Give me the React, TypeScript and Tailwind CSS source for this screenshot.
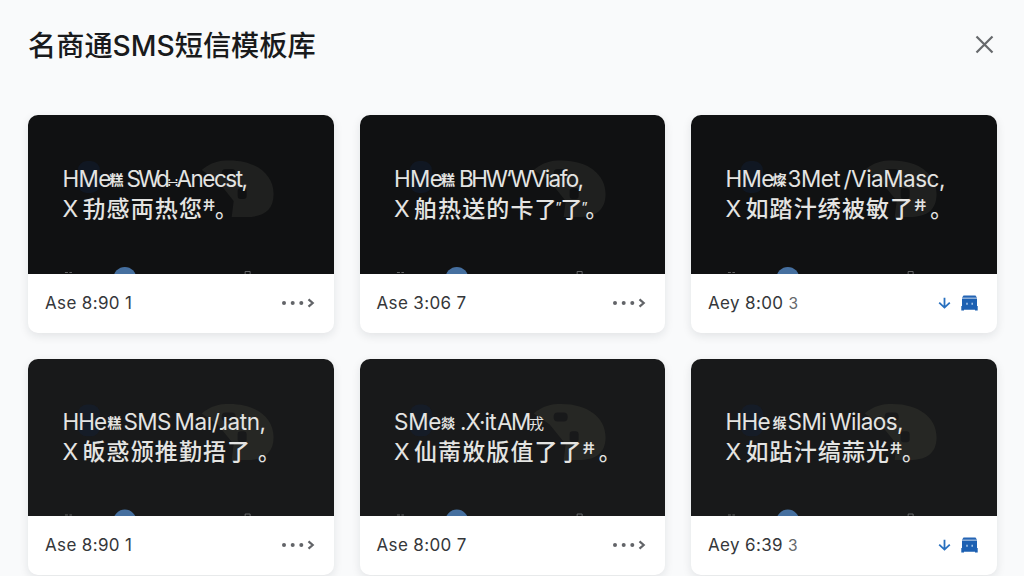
type Segment = { text: string; className?: string };

type Template = {
  first: Segment[];
  second: Segment[];
  name: string;
  count: string;
  action: "more" | "download";
};

const small = "text-[14px] font-bold relative -top-[2px] pl-px w-[16px]";
const mark = "text-[12px] font-bold relative -top-[7px] w-[12px]";
const cross = "w-[20px] font-normal";
const han = "text-[23px] tracking-[1.1px]";
const stop = "text-[22px]";

const templates: Template[] = [
  {
    first: [
      { text: "HMe", className: "w-[46px] tracking-[-0.7px]" },
      { text: "糕", className: small },
      { text: "SWd", className: "w-[42px] pl-0.5 tracking-[-3px]" },
      { text: "∺", className: "w-[10px] text-[14px]" },
      { text: "Anecst,", className: "w-[72px] tracking-[-1.5px]" },
    ],
    second: [
      { text: "X", className: cross },
      { text: "劧感両热您", className: han },
      { text: "井", className: mark },
      { text: "。", className: stop },
    ],
    name: "Ase 8:90",
    count: "1",
    action: "more",
  },
  {
    first: [
      { text: "HMe", className: "w-[46px] tracking-[-0.7px]" },
      { text: "糕", className: small },
      { text: "BHW", className: "w-[50px] pl-[3px] tracking-[-2.4px]" },
      { text: "‘WViafo,", className: "w-[80px] tracking-[-1.6px]" },
    ],
    second: [
      { text: "X", className: cross },
      { text: "舶热送的卡", className: han },
      { text: "了", className: "text-[22px] w-[21px]" },
      { text: "”", className: "text-[13px] w-[5px] relative -top-[5px]" },
      { text: "了", className: "text-[22px] w-[21px]" },
      { text: "”", className: "text-[13px] w-[4px] relative -top-[5px]" },
      { text: "。", className: stop },
    ],
    name: "Ase 3:06",
    count: "7",
    action: "more",
  },
  {
    first: [
      { text: "HMe", className: "w-[46px] tracking-[-0.7px]" },
      { text: "燦", className: small },
      { text: "3Met", className: "w-[56px] tracking-[-0.5px]" },
      { text: "/ViaMasc,", className: "w-[103px] tracking-[-0.5px]" },
    ],
    second: [
      { text: "X", className: cross },
      { text: "如踏汁绣被敏了", className: han },
      { text: "井", className: mark },
      { text: "。", className: "text-[22px] pl-1" },
    ],
    name: "Aey 8:00",
    count: "3",
    action: "download",
  },
  {
    first: [
      { text: "HHe", className: "w-[44px] tracking-[-1px]" },
      { text: "糕", className: small },
      { text: "SMS", className: "w-[52px] pl-px tracking-[-0.6px]" },
      { text: "Maı/ɹatn,", className: "w-[92px] tracking-[-0.4px]" },
    ],
    second: [
      { text: "X", className: cross },
      { text: "皈惑颁推勤捂", className: han },
      { text: "了", className: "text-[23px] w-[31px]" },
      { text: "。", className: stop },
    ],
    name: "Ase 8:90",
    count: "1",
    action: "more",
  },
  {
    first: [
      { text: "SMe", className: "w-[46px] tracking-[-0.2px]" },
      { text: "燚", className: small },
      { text: ".X·it", className: "w-[41px] pl-1 tracking-[-0.9px]" },
      { text: "AM", className: "w-[32px] tracking-[-1.4px]" },
      { text: "戎", className: "text-[15px] w-[15px] relative -top-px" },
    ],
    second: [
      { text: "X", className: cross },
      { text: "仙萳敚版值了了", className: han },
      { text: "井", className: mark },
      { text: "。", className: "text-[22px] pl-1" },
    ],
    name: "Ase 8:00",
    count: "7",
    action: "more",
  },
  {
    first: [
      { text: "HHe", className: "w-[46px] tracking-[-0.7px]" },
      { text: "缑", className: small },
      { text: "SMi", className: "w-[42px] tracking-[-0.5px]" },
      { text: "Wilaos,", className: "w-[75px] tracking-[-0.6px]" },
    ],
    second: [
      { text: "X", className: cross },
      { text: "如跕汁缟蒜光", className: han },
      { text: "井", className: mark },
      { text: "。", className: stop },
    ],
    name: "Aey 6:39",
    count: "3",
    action: "download",
  },
];

function Line({ segments, className }: { segments: Segment[]; className: string }) {
  return (
    <p className={`flex items-baseline whitespace-pre ${className}`}>
      {segments.map((segment, i) => (
        <span key={i} className={`shrink-0 leading-[30px] ${segment.className ?? ""}`}>
          {segment.text}
        </span>
      ))}
    </p>
  );
}

function Backdrop({ dark }: { dark: boolean }) {
  const base = dark ? "#101112" : "#18191a";
  const blob = dark ? "#1f201f" : "#262724";
  return (
    <svg className="absolute inset-0 h-full w-full" viewBox="0 0 306 159" preserveAspectRatio="none">
      <rect x="50" y="46" width="22" height="32" rx="9" fill="#102343" opacity="0.35" />
      <path
        d="M174 55C180 50 187 46 198 45.500C226 44 246 58 246 79C246 96 235 102 219 102H204L206 86L190 66Z"
        fill={blob}
      />
      <rect x="194" y="54" width="14" height="9" rx="4" fill={base} />
      <rect x="210" y="73" width="9" height="11" rx="3" fill={base} />
      <circle cx="97" cy="163.500" r="11.500" fill="#456f9f" />
      <path d="M37 157.500h3m1.500 0h2.500M217.500 159v-2.500h5v2.500" fill="none" stroke="#77797a" strokeWidth="0.8" />
    </svg>
  );
}

function MoreIcon() {
  return (
    <svg width="34" height="12" viewBox="0 0 34 12">
      <g fill="#626468">
        <circle cx="3" cy="6" r="2" />
        <circle cx="11.700" cy="6" r="2" />
        <circle cx="20.300" cy="6" r="2" />
      </g>
      <path d="M27.500 2.400 31.700 6l-4.200 3.600" fill="none" stroke="#626468" strokeWidth="2.200" />
    </svg>
  );
}

function DownloadIcons() {
  return (
    <div className="flex items-center gap-[10px]">
      <svg width="13" height="12" viewBox="0 0 13 12" fill="none" stroke="#2870bf" strokeWidth="1.800">
        <path d="M6.500 .8v9.700M1.200 5.600l5.300 5 5.300-5" />
      </svg>
      <svg width="17" height="16" viewBox="0 0 17 16">
        <path d="M2.500 .5h12l1.500 2.300h-15z" fill="#2464b4" />
        <path d="M1 3.500h15v7.500h.7v4.500h-2.700v-.8h-11v.8H.3V11H1z" fill="#1c60b2" />
        <path d="M6 7.700v2M11.200 7.700v2" stroke="#b5d1ed" strokeWidth="1.400" />
      </svg>
    </div>
  );
}

function TemplateCard({ template, dark }: { template: Template; dark: boolean }) {
  return (
    <article className="overflow-hidden rounded-[10px] bg-white shadow-[0_3px_10px_rgba(20,25,40,0.10)]">
      <div
        className={`relative overflow-hidden text-[#e4e4e2] ${
          dark ? "h-[159px] bg-[#101112] pt-[49px]" : "h-[157.5px] bg-[#18191a] pt-[48px]"
        }`}
      >
        <Backdrop dark={dark} />
        <div className="relative pl-[34.5px]">
          <Line segments={template.first} className="h-[30px] text-[22.5px]" />
          <Line segments={template.second} className="h-[30px] text-[23px] font-medium" />
        </div>
      </div>
      <div className="flex h-[59px] items-center justify-between pl-[17px] pr-[19px]">
        <p className="text-[17px] tracking-[0.35px] text-[#35373a]">
          {template.name}{" "}
          <span className={template.action === "download" ? "text-[15.5px] text-[#66686b]" : ""}>
            {template.count}
          </span>
        </p>
        <div className="pb-[2px]">{template.action === "more" ? <MoreIcon /> : <DownloadIcons />}</div>
      </div>
    </article>
  );
}

export default function App() {
  return (
    <main className="h-[576px] overflow-hidden bg-[#f9fafb] px-7 font-['Inter','Noto_Sans_CJK_SC',sans-serif]">
      <header className="flex h-[115px] items-start justify-between pt-[26px]">
        <h1 className="text-[28.2px] leading-[40px] font-medium text-[#191a1c]">名商通SMS短信模板库</h1>
        <svg className="mt-[9px] mr-[2px]" width="19" height="19" viewBox="0 0 19 19">
          <path d="M1.500 1.500l16 16m0-16l-16 16" stroke="#66686b" strokeWidth="2.200" />
        </svg>
      </header>
      <div className="grid grid-cols-[repeat(3,305.5px)] gap-x-[26px] gap-y-[25.5px]">
        {templates.map((template, i) => (
          <TemplateCard key={i} template={template} dark={i < 3} />
        ))}
      </div>
    </main>
  );
}
